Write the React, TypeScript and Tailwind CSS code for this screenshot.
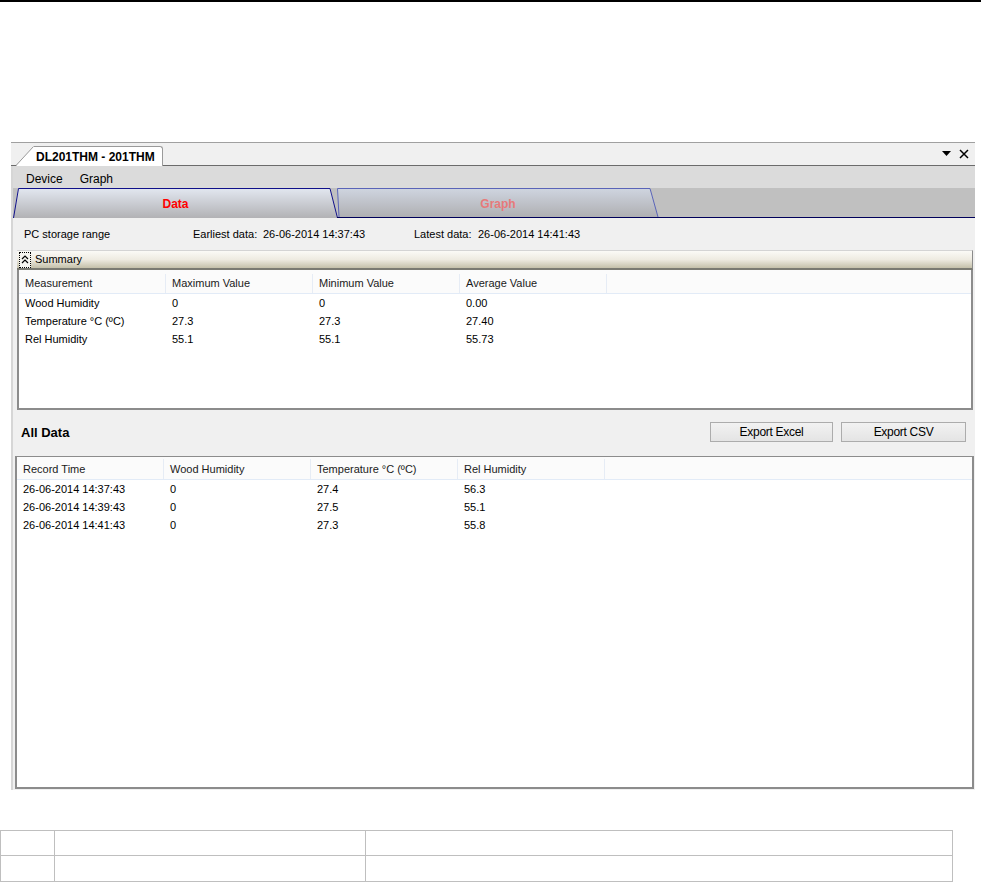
import React from 'react'

const summaryRows = [
  ['Wood Humidity', '0', '0', '0.00'],
  ['Temperature °C (ºC)', '27.3', '27.3', '27.40'],
  ['Rel Humidity', '55.1', '55.1', '55.73'],
]

const dataRows = [
  ['26-06-2014 14:37:43', '0', '27.4', '56.3'],
  ['26-06-2014 14:39:43', '0', '27.5', '55.1'],
  ['26-06-2014 14:41:43', '0', '27.3', '55.8'],
]

function GridTable({ headers, rows, headerClass }: { headers: string[]; rows: string[][]; headerClass: string }) {
  return (
    <div className="flex flex-col">
      <div className={`flex bg-[#fbfbfb] border-b border-[#e2ebf7] ${headerClass}`}>
        {headers.map(h => (
          <div key={h} className="w-[147px] border-r border-[#e6ecf5] pl-[6px] flex items-center text-[11px] text-[#1a1a1a]">
            {h}
          </div>
        ))}
      </div>
      {rows.map((r, i) => (
        <div key={i} className="flex h-[18px]">
          {r.map((c, j) => (
            <div key={j} className="w-[147px] pl-[6px] flex items-center text-[11px] text-black">
              {c}
            </div>
          ))}
        </div>
      ))}
    </div>
  )
}

function DataTab() {
  return (
    <div className="relative w-[325px] h-[30px] flex items-center justify-center">
      <svg className="absolute inset-0" width="325" height="30" viewBox="0 0 325 30">
        <defs>
          <linearGradient id="gData" x1="0" y1="0" x2="0" y2="1">
            <stop offset="0" stopColor="#e2e7f0" />
            <stop offset="1" stopColor="#b2b2b5" />
          </linearGradient>
        </defs>
        <polygon points="0,30 5,0.5 317,0.5 324,30" fill="url(#gData)" />
        <polyline points="0.5,30 5.5,0.5 317,0.5 324.5,30" fill="none" stroke="#10108a" strokeWidth="1" />
      </svg>
      <span className="relative text-[12px] font-bold text-[#ff0000] pt-[1px]">Data</span>
    </div>
  )
}

function GraphTab() {
  return (
    <div className="relative w-[322px] h-[30px] flex items-center justify-center">
      <svg className="absolute inset-0" width="322" height="30" viewBox="0 0 322 30">
        <defs>
          <linearGradient id="gGraph" x1="0" y1="0" x2="0" y2="1">
            <stop offset="0" stopColor="#cfd5e0" />
            <stop offset="1" stopColor="#afafb2" />
          </linearGradient>
        </defs>
        <polygon points="0,0.5 313,0.5 321,29 2,29" fill="url(#gGraph)" />
        <polyline points="2,29 0.5,0.5 313,0.5 321,29" fill="none" stroke="#5a64b8" strokeWidth="1" />
        <line x1="0" y1="29.5" x2="322" y2="29.5" stroke="#00005a" strokeWidth="1" />
      </svg>
      <span className="relative text-[12px] font-bold text-[#e77a7a] pt-[1px]">Graph</span>
    </div>
  )
}

export default function App() {
  return (
    <div className="w-[981px] h-[882px] bg-white font-['Liberation_Sans',Arial,sans-serif] overflow-hidden">
      <div className="h-[2px] bg-black" />
      <div className="h-[140px]" />

      {/* window */}
      <div className="ml-[11px] w-[964px] flex flex-col">
        {/* document tab strip */}
        <div className="h-[24px] bg-[#f0f0f0] border-t border-[#a0a0a0] border-b border-b-[#6b6b6b] flex items-end relative">
          <div className="flex items-end ml-[5px] h-[20px] -mb-[1px]">
            <svg width="18" height="20" viewBox="0 0 18 20">
              <polygon points="0,20 17,1 18,1 18,20" fill="#ffffff" />
              <line x1="0" y1="19.5" x2="17.5" y2="0.5" stroke="#9a9a9a" strokeWidth="1" />
            </svg>
            <div className="h-[20px] bg-white border-t border-r border-[#9a9a9a] rounded-tr-[3px] pl-[2px] pr-[7px] flex items-center">
              <span className="text-[12px] font-bold text-black">DL201THM - 201THM</span>
            </div>
          </div>
          <div className="flex-1" />
          <div className="flex items-center gap-[8px] self-center mr-[6px]">
            <svg width="9" height="6" viewBox="0 0 9 6"><polygon points="0,0 9,0 4.5,5" fill="#000" /></svg>
            <svg width="10" height="10" viewBox="0 0 10 10"><path d="M1 1L9 9M9 1L1 9" stroke="#000" strokeWidth="1.5" /></svg>
          </div>
        </div>

        {/* body */}
        <div className="border-l-2 border-[#d6d6d6] flex flex-col">
          <div className="h-[22px] bg-[#dbdbdb] flex items-center pt-[4px] text-[12px] text-black">
            <span className="ml-[13px]">Device</span>
            <span className="ml-[17px]">Graph</span>
          </div>

          <div className="h-[30px] bg-[#c0c0c0] flex items-end">
            <DataTab />
            <div className="-ml-[1px]">
              <GraphTab />
            </div>
            <div className="flex-1 h-[30px] border-b border-[#00005a]" />
          </div>

          <div className="h-[32px] bg-[#f0f0f0] flex items-center text-[11px] text-black">
            <span className="ml-[11px] w-[169px]">PC storage range</span>
            <span className="w-[70px]">Earliest data:</span>
            <span className="w-[151px]">26-06-2014 14:37:43</span>
            <span className="w-[64px]">Latest data:</span>
            <span>26-06-2014 14:41:43</span>
          </div>

          <div className="bg-[#f0f0f0] pl-[4px] pr-[2px]">
            <div className="h-[20px] border-t border-[#d4d4d4] border-r border-r-[#8a8a8a] border-b-2 border-b-[#7a7a72] bg-gradient-to-b from-[#fbfaf6] via-[#eeebe1] to-[#c4c0aa] flex items-center">
              <div className="ml-[2px] w-[12px] h-[16px] border border-dotted border-black flex items-center justify-center bg-[#f6f5f0]">
                <svg width="8" height="9" viewBox="0 0 8 9">
                  <path d="M1 4L4 1L7 4M1 8L4 5L7 8" fill="none" stroke="#000" strokeWidth="1.2" />
                </svg>
              </div>
              <span className="ml-[4px] text-[11px] text-black">Summary</span>
            </div>
            <div className="h-[140px] bg-white border-2 border-t-0 border-[#8c8c8c] overflow-hidden">
              <GridTable
                headers={['Measurement', 'Maximum Value', 'Minimum Value', 'Average Value']}
                rows={summaryRows}
                headerClass="h-[24px] pt-[4px]"
              />
            </div>
          </div>

          <div className="h-[46px] bg-[#f0f0f0] flex items-start">
            <span className="ml-[8px] mt-[13px] text-[13px] font-bold text-black">All Data</span>
            <div className="flex-1" />
            <div className="flex gap-[8px] mt-[12px] mr-[9px]">
              <button className="w-[123px] h-[20px] border border-[#acacac] bg-gradient-to-b from-[#f2f2f2] to-[#e4e4e4] text-[12px] text-black tracking-[-0.3px]">
                Export Excel
              </button>
              <button className="w-[125px] h-[20px] border border-[#acacac] bg-gradient-to-b from-[#f2f2f2] to-[#e4e4e4] text-[12px] text-black tracking-[-0.3px]">
                Export CSV
              </button>
            </div>
          </div>

          <div className="bg-[#f0f0f0] pl-[2px] pr-[1px] pb-[1px]">
            <div className="h-[333px] bg-white border-2 border-[#8c8c8c] border-t-[1px] overflow-hidden">
              <GridTable
                headers={['Record Time', 'Wood Humidity', 'Temperature °C (ºC)', 'Rel Humidity']}
                rows={dataRows}
                headerClass="h-[23px] pt-[2px]"
              />
            </div>
          </div>
        </div>
      </div>

      <div className="h-[40px]" />

      <table className="border-collapse w-[953px]">
        <tbody>
          <tr className="h-[25px]">
            <td className="w-[54px] border border-[#bfbfbf]" />
            <td className="w-[311px] border border-[#bfbfbf]" />
            <td className="border border-[#bfbfbf]" />
          </tr>
          <tr className="h-[26px]">
            <td className="border border-[#bfbfbf]" />
            <td className="border border-[#bfbfbf]" />
            <td className="border border-[#bfbfbf]" />
          </tr>
        </tbody>
      </table>
    </div>
  )
}
